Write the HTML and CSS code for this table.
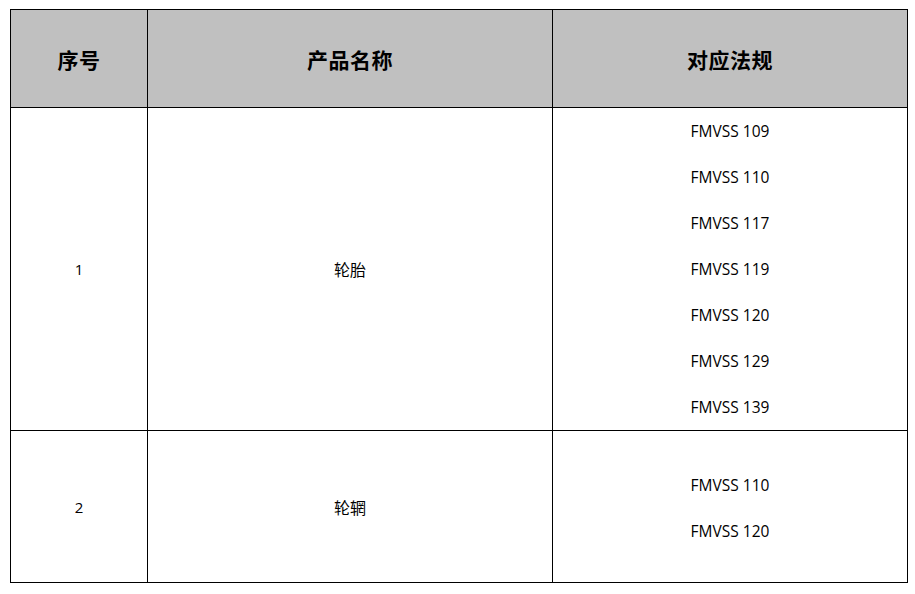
FILE: index.html
```html
<!DOCTYPE html>
<html lang="zh">
<head>
<meta charset="utf-8">
<title>产品法规</title>
<link rel="stylesheet" href="styles.css">
</head>
<body>
<div class="page">
<table class="regs">
<colgroup>
<col class="c-no">
<col class="c-name">
<col class="c-law">
</colgroup>
<thead>
<tr class="head-row">
<th>序号</th>
<th>产品名称</th>
<th>对应法规</th>
</tr>
</thead>
<tbody>
<tr class="row-tire">
<td class="num">1</td>
<td class="name">轮胎</td>
<td class="laws">
<div class="law">FMVSS 109</div>
<div class="law">FMVSS 110</div>
<div class="law">FMVSS 117</div>
<div class="law">FMVSS 119</div>
<div class="law">FMVSS 120</div>
<div class="law">FMVSS 129</div>
<div class="law">FMVSS 139</div>
</td>
</tr>
<tr class="row-rim">
<td class="num">2</td>
<td class="name">轮辋</td>
<td class="laws">
<div class="law">FMVSS 110</div>
<div class="law">FMVSS 120</div>
</td>
</tr>
</tbody>
</table>
</div>
</body>
</html>
```

FILE: styles.css
```css
html, body {
  margin: 0;
  padding: 0;
  background: #ffffff;
}

.page {
  padding: 9px 0 0 10px;
}

.regs {
  border-collapse: collapse;
  table-layout: fixed;
  width: 897px;
  font-family: "Open Sans", "Noto Sans CJK SC", sans-serif;
  color: #000000;
}

.c-no { width: 137px; }
.c-name { width: 405px; }
.c-law { width: 355px; }

.regs th,
.regs td {
  border: 1px solid #000000;
  text-align: center;
  vertical-align: middle;
  padding: 0;
}

.regs th {
  background: #c0c0c0;
  height: 97px;
  font-family: "Noto Sans CJK SC", sans-serif;
  font-weight: 700;
  font-size: 21px;
  letter-spacing: 0.5px;
}

.num {
  font-size: 15px;
}

.name {
  font-family: "Noto Sans CJK SC", sans-serif;
  font-size: 16px;
}

.laws {
  font-size: 15.5px;
  padding: 1px 0 2px;
}

.law {
  height: 46px;
  line-height: 46px;
}

.row-rim td {
  height: 151px;
}

.row-rim .laws {
  height: 148px;
  padding: 3px 0 0;
}
```
